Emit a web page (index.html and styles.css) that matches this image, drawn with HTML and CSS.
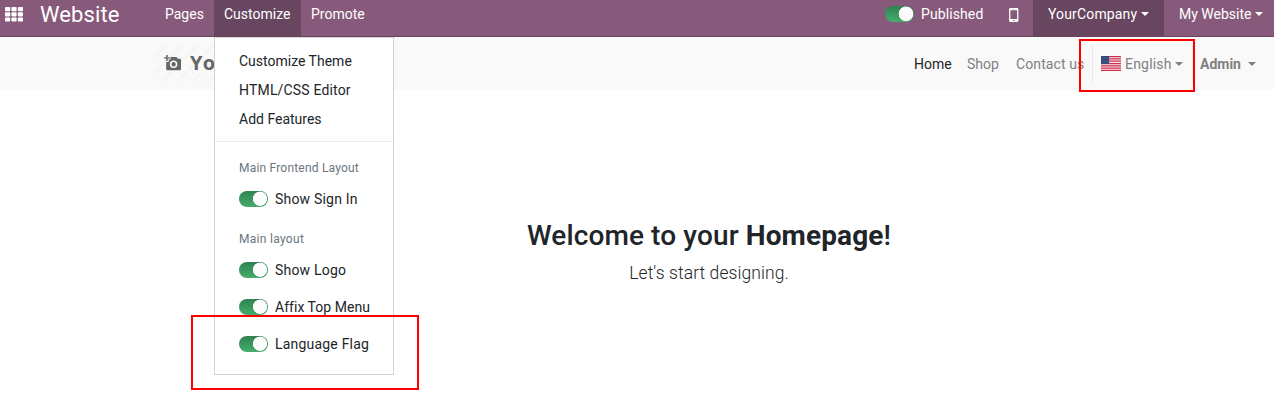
FILE: index.html
```html
<!DOCTYPE html>
<html lang="en">
<head>
<meta charset="utf-8">
<title>Website</title>
<link rel="stylesheet" href="styles.css">
</head>
<body>
<div class="topbar">
  <svg class="apps" width="18" height="15" viewBox="0 0 18 15" fill="#fff">
    <rect x="0" y="0" width="5.2" height="4.2" rx=".8"/><rect x="6.4" y="0" width="5.2" height="4.2" rx=".8"/><rect x="12.8" y="0" width="5.2" height="4.2" rx=".8"/>
    <rect x="0" y="5.2" width="5.2" height="4.2" rx=".8"/><rect x="6.4" y="5.2" width="5.2" height="4.2" rx=".8"/><rect x="12.8" y="5.2" width="5.2" height="4.2" rx=".8"/>
    <rect x="0" y="10.4" width="5.2" height="4.2" rx=".8"/><rect x="6.4" y="10.4" width="5.2" height="4.2" rx=".8"/><rect x="12.8" y="10.4" width="5.2" height="4.2" rx=".8"/>
  </svg>
  <div class="brand">Website</div>
  <div class="menu pages">Pages</div>
  <div class="menu customize active">Customize
    <div class="dropdown">
      <div class="item">Customize Theme</div>
      <div class="item editor">HTML/CSS Editor</div>
      <div class="item">Add Features</div>
      <div class="divider"></div>
      <div class="heading wide">Main Frontend Layout</div>
      <div class="option"><span class="switch"></span>Show Sign In</div>
      <div class="heading second">Main layout</div>
      <div class="option"><span class="switch"></span>Show Logo</div>
      <div class="option affix"><span class="switch"></span>Affix Top Menu</div>
      <div class="option"><span class="switch"></span>Language Flag</div>
    </div>
  </div>
  <div class="menu">Promote</div>
  <div class="systray">
    <div class="publish"><span class="switch plain"></span>Published</div>
    <svg class="phone" width="10" height="14" viewBox="0 0 10 14"><path fill="#fff" fill-rule="evenodd" d="M1.3 0H8.2Q9.4 0 9.4 1.2V12.8Q9.4 14 8.2 14H1.3Q.1 14 .1 12.8V1.2Q.1 0 1.3 0ZM1.4 2.2V11H8.1V2.2ZM4 12.1V13H5.5V12.1ZM3.3 .9V1.3H6.2V.9Z"/></svg>
    <div class="menu company active"><span>YourCompany</span><i class="caret"></i></div>
    <div class="menu site"><span>My Website</span><i class="caret"></i></div>
  </div>
</div>
<div class="header">
  <div class="logo">
    <svg width="18" height="16" viewBox="0 0 18 16"><path fill="#666" fill-rule="evenodd" d="M2.2 0H3.7V2.2H6V3.6H3.7V6H2.2V3.6H0V2.2H2.2ZM7 2H12.5L13.8 3.7H15.8Q17 3.7 17 4.9V14Q17 15.2 15.8 15.2H3.4Q2.2 15.2 2.2 14V7H4.7V4.6H6.5V2.6ZM9.6 5.5A3.8 3.8 0 1 0 9.6 13.1A3.8 3.8 0 1 0 9.6 5.5ZM9.6 7.1A2.2 2.2 0 1 1 9.6 11.5A2.2 2.2 0 1 1 9.6 7.1Z"/></svg>
    <span>Your</span>
  </div>
  <div class="nav">
    <span class="home">Home</span><span class="shop">Shop</span><span class="contact">Contact us</span>
    <div class="lang">
      <svg width="20" height="15" viewBox="0 0 20 15">
        <rect width="20" height="15" fill="#f4e8ec"/>
        <path stroke="#cf304f" stroke-width="1.25" d="M0 .6H20M0 2.9H20M0 5.2H20M0 7.5H20M0 9.8H20M0 12.1H20M0 14.4H20"/>
        <rect width="8" height="8" fill="#2b4274"/>
        <path stroke="#7585a8" stroke-width=".7" stroke-dasharray=".8 1" d="M.6 1.2H8M1.2 2.7H8M.6 4.2H8M1.2 5.7H8M.6 7.1H8"/>
      </svg>
      <span>English</span><i class="caret"></i>
      <div class="mark lang-mark"></div>
    </div>
    <b class="admin">Admin</b><i class="caret"></i>
  </div>
</div>
<main>
  <h1>Welcome to your <b>Homepage</b>!</h1>
  <p>Let's start designing.</p>
</main>
<div class="mark flag-mark"></div>
</body>
</html>
```
FILE: styles.css
```css
* { box-sizing: border-box; }
body { margin: 0; height: 412px; overflow: hidden; background: #fff; color: #212529; font: 14px/28px Roboto, sans-serif; }
.topbar { display: flex; height: 37px; background: #875a7b; border-bottom: 1px solid #68465f; color: #fff; position: relative; z-index: 2; }
.apps { margin: 7px 0 0 5px; flex: none; }
.brand { width: 115px; margin-left: 17px; font-size: 22px; line-height: 30px; letter-spacing: .1px; }
.menu { height: 36px; padding: 0 10px; white-space: nowrap; flex: none; }
.menu.active { background: #68465f; }
.pages { width: 59px; }
.customize { width: 87px; position: relative; }
.dropdown { position: absolute; left: 0; top: 37px; width: 180px; height: 338px; padding: 9px 0 0; background: #fff; border: 1px solid #d3d3d3; color: #212529; }
.item { height: 29px; padding-left: 24px; line-height: 29px; }
.editor { letter-spacing: .17px; }
.divider { height: 1px; margin-top: 7px; background: #e9ecef; }
.heading { height: 33px; margin-top: 8px; padding-left: 24px; font-size: 12px; line-height: 36px; color: #6c757d; }
.heading.wide { letter-spacing: .2px; }
.heading.second { margin-top: 5px; height: 29px; line-height: 36px; letter-spacing: .3px; }
.option { height: 37px; padding: 2px 0 0 24px; display: flex; align-items: center; letter-spacing: .2px; }
.option.affix { letter-spacing: .03px; }
.heading + .option { margin-top: -4px; }
.second + .option { margin-top: 0; }
.switch { width: 29px; height: 16px; margin-right: 7px; flex: none; border-radius: 8px; background: radial-gradient(circle at 21px 7.7px, #fcfcfc 0 6.8px, transparent 7.4px), linear-gradient(#318250, #45ad6c); }
.switch.plain { background: radial-gradient(circle at 21px 7.8px, #fcfcfc 0 7px, transparent 7.6px), linear-gradient(#318250, #45ad6c); }
.systray { display: flex; margin-left: auto; }
.publish { display: flex; align-items: center; width: 124px; height: 28px; letter-spacing: .1px; }
.phone { width: 10px; margin: 8px 14px 0 0; }
.company { width: 131px; padding: 0 15px; letter-spacing: .15px; }
.site { width: 110px; padding: 0 0 0 15px; }
.caret { display: inline-block; border: 4px solid transparent; border-top-color: currentColor; border-bottom: 0; margin-left: 4px; vertical-align: 3px; }
.header { display: flex; height: 53px; background: #f9f9f9; color: #808080; position: relative; }
.logo { display: flex; width: 100px; height: 37px; margin: 8px 0 0 154px; padding: 10px 0 0 10px; background: repeating-linear-gradient(135deg, #f9f9f9 0 8px, #f4f4f4 8.5px 10px, #f9f9f9 10.5px 11px); color: #666; font: bold 20px/18px "Open Sans", sans-serif; letter-spacing: .3px; }
.logo svg { flex: none; margin-right: 8px; }
.logo span { margin-top: -1px; }
.nav { position: relative; display: flex; align-items: center; margin-left: auto; width: 360px; height: 53px; white-space: nowrap; }
.home { width: 53px; color: #212529; }
.shop { width: 49px; }
.contact { width: 76px; letter-spacing: .1px; }
.lang { position: relative; display: flex; align-items: center; width: 101px; height: 37px; padding-left: 8px; border: solid #e9e9e9; border-width: 0 1px; margin-right: 7px; }
.lang span { margin-left: 4px; letter-spacing: .2px; }
.lang .caret { margin-left: 3px; }
.admin { font-weight: 700; }
.admin + .caret { margin-left: 7px; }
.mark { position: absolute; border: 2px solid #f00; z-index: 5; }
.lang-mark { left: -14px; top: -6px; width: 116px; height: 53px; }
main { text-align: center; padding: 128px 0 0 144px; }
h1 { margin: 0; font-size: 28px; line-height: 36px; font-weight: 500; letter-spacing: .12px; }
h1 b { font-weight: 700; }
p { margin: 5px 0 0; font-size: 17.5px; line-height: 28px; font-weight: 300; letter-spacing: .08px; }
.flag-mark { left: 191px; top: 315px; width: 228px; height: 75px; }
```
